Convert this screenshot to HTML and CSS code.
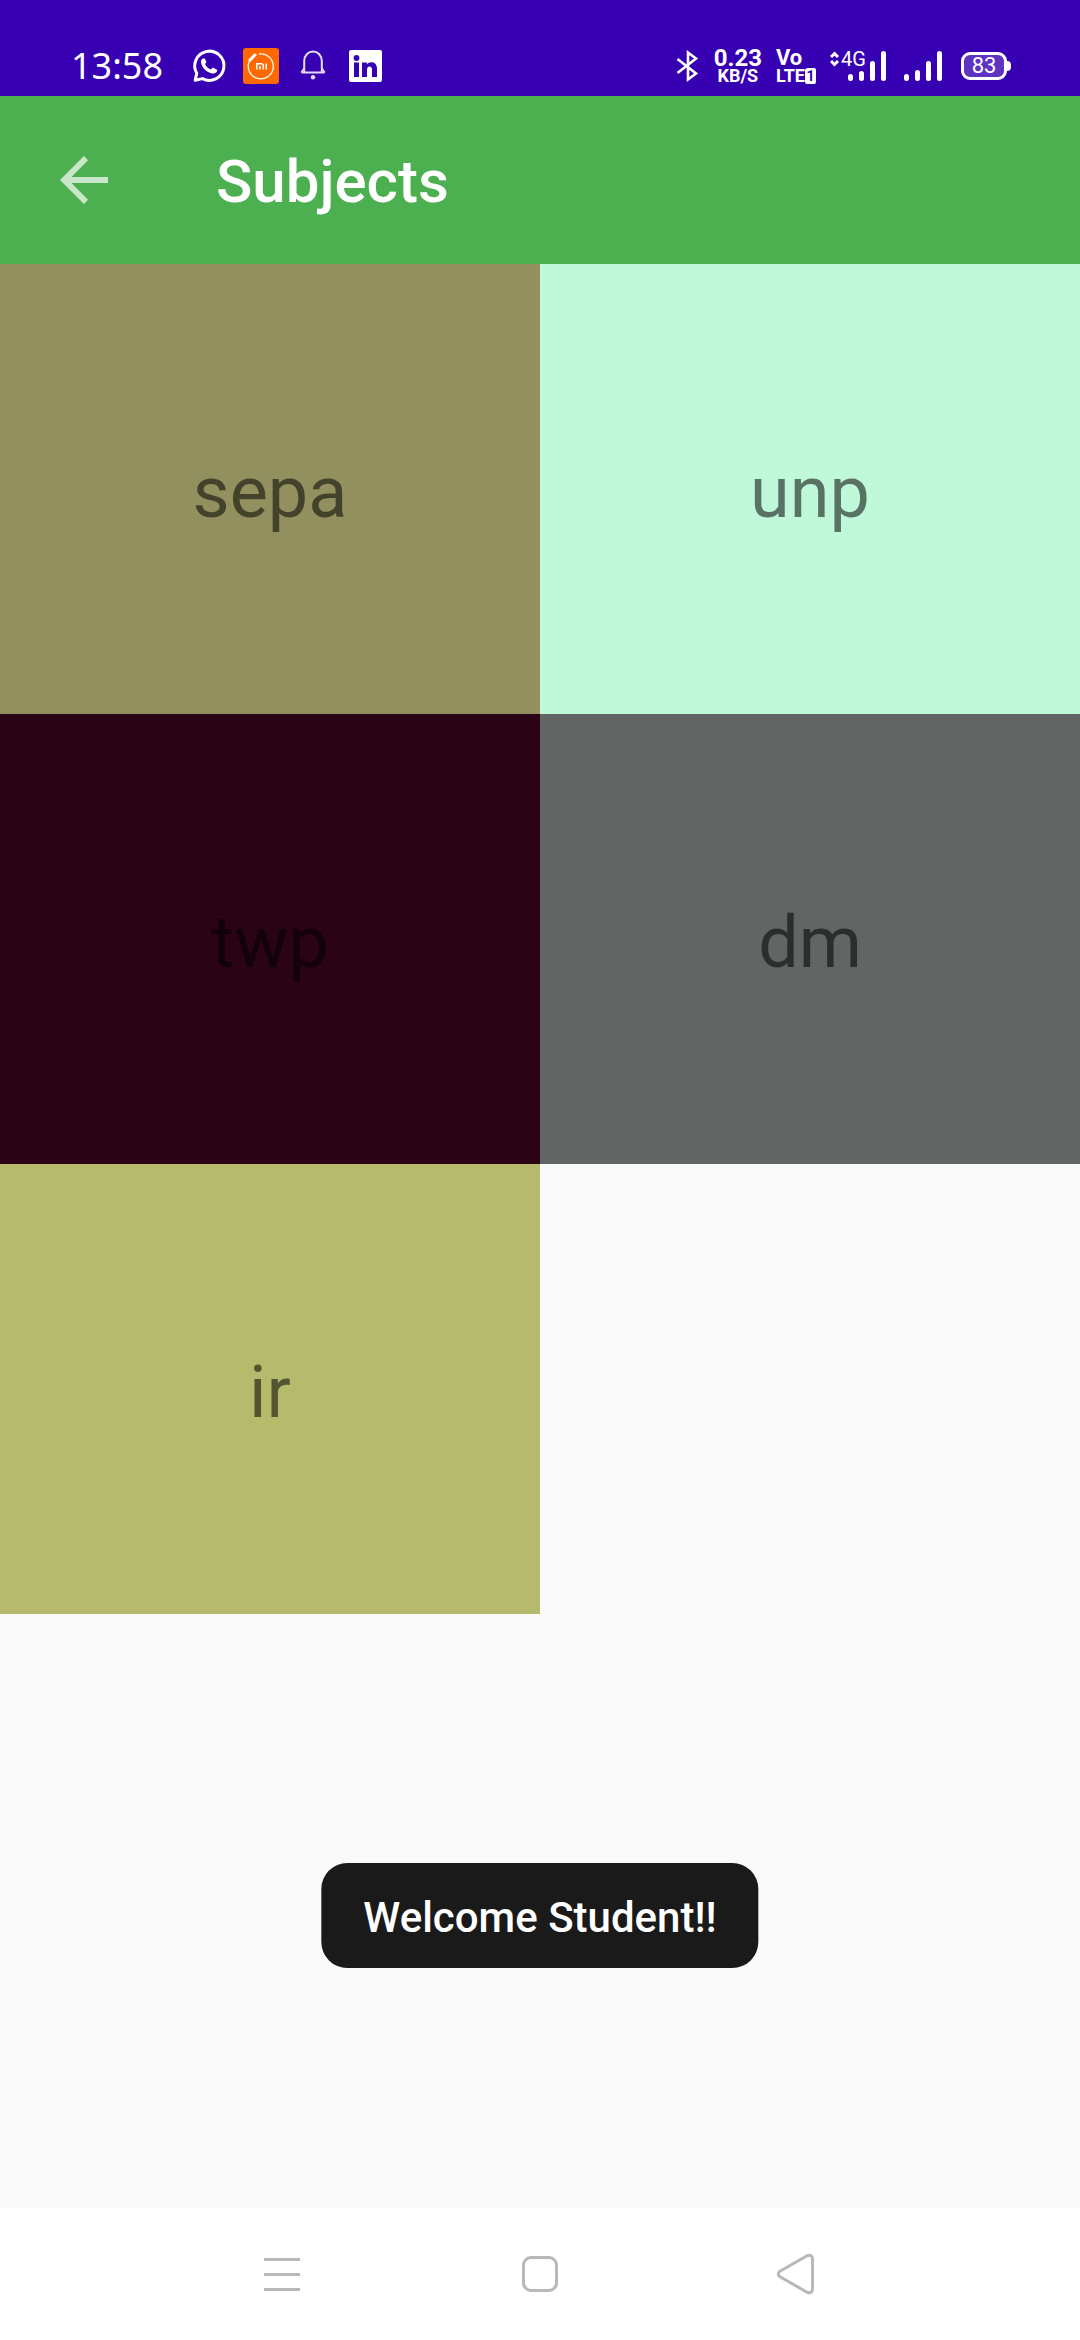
FILE: index.html
```html
<!DOCTYPE html>
<html lang="en">
<head>
<meta charset="utf-8">
<meta name="viewport" content="width=device-width, initial-scale=1">
<title>Subjects</title>
<link rel="stylesheet" href="styles.css">
</head>
<body>
<div class="screen">
  <div class="status-bar">
    <div class="status-group status-left">
      <span class="clock">13:58</span>
      <svg class="icon" width="36" height="36" viewBox="0 0 36 36" aria-label="WhatsApp">
        <path d="M4.200 32.200 5.800 25.200A14.600 14.600 0 1 1 11.400 30.600Z" fill="none" stroke="#fff" stroke-width="3" stroke-linejoin="round"/>
        <path d="M12.500 10.500c-1.800 0-2.800 1.800-2.500 4 .8 5 5.500 10 11.500 11 2.500.3 4.700-1 4.800-3.500l-4.300-2.500-2.300 2c-2.600-1-4.700-3-5.700-5.500l1.500-1.800-1.500-3.500Z" fill="#fff"/>
      </svg>
      <svg class="icon" width="36" height="36" viewBox="0 0 36 36" aria-label="Mi">
        <rect width="36" height="36" rx="3" fill="#ff6900"/>
        <path d="M16 6A12.500 12.500 0 1 1 6.500 13" fill="none" stroke="#fff" stroke-width="1.300"/>
        <path d="M7 12l5-5" stroke="#fff" stroke-width="3" stroke-linecap="round"/>
        <path d="M13.800 21.500v-5.700h4.500q2 0 2 2v3.700M17 18v3.500M23.200 15.500v6" fill="none" stroke="#fff" stroke-width="1.500"/>
      </svg>
      <svg class="icon" width="36" height="36" viewBox="0 0 36 36" aria-label="Notification">
        <path d="M6.500 24.500h23M9.200 24V13a8.800 9.500 0 0 1 17.600 0V24" fill="none" stroke="#e4dcf7" stroke-width="2"/>
        <path d="M9.200 20l-3 4.500M26.800 20l3 4.500" stroke="#e4dcf7" stroke-width="1.500"/>
        <circle cx="18" cy="29.300" r="2.200" fill="#e4dcf7"/>
      </svg>
      <svg class="icon" width="36" height="36" viewBox="0 0 36 36" aria-label="LinkedIn">
        <rect x="2" y="2" width="33" height="32" rx="2" fill="#fff"/>
        <circle cx="9.500" cy="10" r="2.900" fill="#3700b3"/>
        <path d="M7 14.500h5V29H7zM15 14.500h4.800v2c2.700-3.700 10.200-3 10.200 4V29h-5v-7.500c0-4-5-3.800-5 0V29h-5z" fill="#3700b3"/>
      </svg>
    </div>
    <div class="status-group status-right">
      <svg class="icon" width="24" height="36" viewBox="0 0 24 36" aria-label="Bluetooth">
        <path d="M1.500 11 20 25.500 12 31.500V4.500L20 10.500 1.500 25" fill="none" stroke="#fff" stroke-width="2.600"/>
      </svg>
      <span class="stack net-speed"><b class="stack-top">0.23</b><b class="stack-bottom">KB/S</b></span>
      <span class="stack volte"><b class="stack-top">Vo</b><span class="lte"><b class="stack-bottom">LTE</b><b class="sim">1</b></span></span>
      <span class="signal">
        <svg class="icon" width="56" height="36" viewBox="0 0 56 36" aria-label="Mobile signal">
          <path d="M1 9 4.500 5.500 8 9M1 13 4.500 16.500 8 13" fill="none" stroke="#fff" stroke-width="3"/>
          <path d="M20.500 28.500v2M31.500 25.500v5M42.500 15.500v15M53.500 5.500v25" stroke="#fff" stroke-width="5" stroke-linecap="round"/>
        </svg>
        <span class="network">4G</span>
      </span>
      <svg class="icon second-signal" width="38" height="36" viewBox="0 0 38 36" aria-label="Second SIM signal">
        <path d="M2.500 28.500v2M13.500 24.500v6M24.500 15.500v15M35.500 5.500v25" stroke="#fff" stroke-width="5" stroke-linecap="round"/>
      </svg>
      <span class="battery">83</span>
    </div>
  </div>

  <header class="app-bar">
    <button class="back" type="button" aria-label="Back">
      <svg class="icon" width="48" height="48" viewBox="0 0 48 48">
        <path d="M48 21H11.500L28 4.200 24 0 0 24l24 24 4-4.200L11.500 27H48z" fill="#fff" fill-opacity=".7"/>
      </svg>
    </button>
    <h1 class="title">Subjects</h1>
  </header>

  <main class="subjects">
    <button class="tile tile-sepa" type="button">sepa</button>
    <button class="tile tile-unp" type="button">unp</button>
    <button class="tile tile-twp" type="button">twp</button>
    <button class="tile tile-dm" type="button">dm</button>
    <button class="tile tile-ir" type="button">ir</button>
  </main>

  <div class="toast" role="status">Welcome Student!!</div>

  <nav class="nav-bar" aria-label="System navigation">
    <button class="nav-button" type="button" aria-label="Recent apps">
      <svg class="icon" width="42" height="42" viewBox="0 0 42 42">
        <path d="M3 6.500h36M3 21.500h36M3 36.500h36" stroke="#b8b8b8" stroke-width="3"/>
      </svg>
    </button>
    <button class="nav-button" type="button" aria-label="Home">
      <svg class="icon" width="42" height="42" viewBox="0 0 42 42">
        <rect x="4.500" y="4.500" width="33" height="33" rx="7.500" fill="none" stroke="#b8b8b8" stroke-width="3"/>
      </svg>
    </button>
    <button class="nav-button" type="button" aria-label="Back">
      <svg class="icon" width="42" height="42" viewBox="0 0 42 42">
        <path d="M2.500 18.500 30 2.800Q35.500 1 35.500 6V36Q35.500 41 30 39.200L2.500 23.500Q0 21 2.500 18.500Z" fill="none" stroke="#b8b8b8" stroke-width="3" stroke-linejoin="round"/>
      </svg>
    </button>
  </nav>
</div>
</body>
</html>
```
FILE: styles.css
```css
* {
  box-sizing: border-box;
}

body {
  margin: 0;
  background: #fafafa;
  font-family: Roboto, "Liberation Sans", sans-serif;
}

button {
  margin: 0;
  padding: 0;
  border: 0;
  background: none;
  font: inherit;
}

.icon {
  display: block;
  flex: none;
}

.screen {
  display: flex;
  flex-direction: column;
  min-height: 100vh;
}

.status-bar {
  display: flex;
  justify-content: space-between;
  height: 96px;
  padding: 48px 73px 12px 71px;
  background: #3700b3;
  color: #fff;
}

.status-group {
  display: flex;
  align-items: center;
  height: 36px;
}

.status-left {
  gap: 16px;
}

.clock {
  margin-right: 12px;
  font-family: "Noto Sans", Roboto, sans-serif;
  font-size: 36px;
  line-height: 40px;
}

.status-right {
  gap: 14px;
}

.stack {
  display: flex;
  flex-direction: column;
}

.net-speed {
  align-items: center;
}

.stack-top {
  font-size: 24px;
  line-height: 20px;
}

.stack-bottom {
  font-size: 18px;
  line-height: 16px;
}

.volte .stack-top {
  font-size: 22px;
}

.lte {
  display: flex;
}

.sim {
  width: 11px;
  border-radius: 3px 2px 2px 2px;
  background: #fff;
  color: #3700b3;
  font-size: 14px;
  line-height: 16px;
  text-align: center;
}

.signal {
  position: relative;
}

.network {
  position: absolute;
  top: 1px;
  left: 11px;
  font-size: 20px;
  line-height: 20px;
}

.second-signal {
  margin-left: 4px;
}

.battery {
  position: relative;
  width: 46px;
  height: 28px;
  margin-left: 5px;
  border: 3px solid #fff;
  border-radius: 9px;
  background: #5f33c2;
  font-size: 22px;
  line-height: 22px;
  text-align: center;
}

.battery::after {
  content: "";
  position: absolute;
  top: 6px;
  right: -7px;
  width: 4px;
  height: 10px;
  border-radius: 0 4px 4px 0;
  background: #fff;
}

.app-bar {
  display: flex;
  align-items: center;
  gap: 108px;
  height: 168px;
  padding: 0 60px;
  background: #4caf50;
  color: #fff;
}

.title {
  margin: 0;
  padding-top: 4px;
  font-size: 60px;
  font-weight: 500;
  line-height: 72px;
}

.subjects {
  display: grid;
  flex: 1;
  grid-template-columns: 1fr 1fr;
  grid-auto-rows: 450px;
  align-content: start;
}

.tile {
  padding-top: 8px;
  color: rgba(0, 0, 0, 0.54);
  font-size: 72px;
  line-height: 84px;
}

.tile-sepa {
  background: #92905f;
}

.tile-unp {
  background: #c0f9d9;
}

.tile-twp {
  background: #2a0315;
}

.tile-dm {
  background: #616563;
}

.tile-ir {
  background: #b6ba6c;
}

.toast {
  position: fixed;
  bottom: 372px;
  left: 50%;
  padding: 30px 42px 25px;
  border-radius: 26px;
  background: #1a1a1a;
  color: #fff;
  font-size: 42px;
  font-weight: 500;
  line-height: 50px;
  white-space: nowrap;
  transform: translateX(-50%);
}

.nav-bar {
  display: flex;
  justify-content: center;
  height: 132px;
  background: #fff;
}

.nav-button {
  display: flex;
  align-items: center;
  justify-content: center;
  width: 258px;
}
```
